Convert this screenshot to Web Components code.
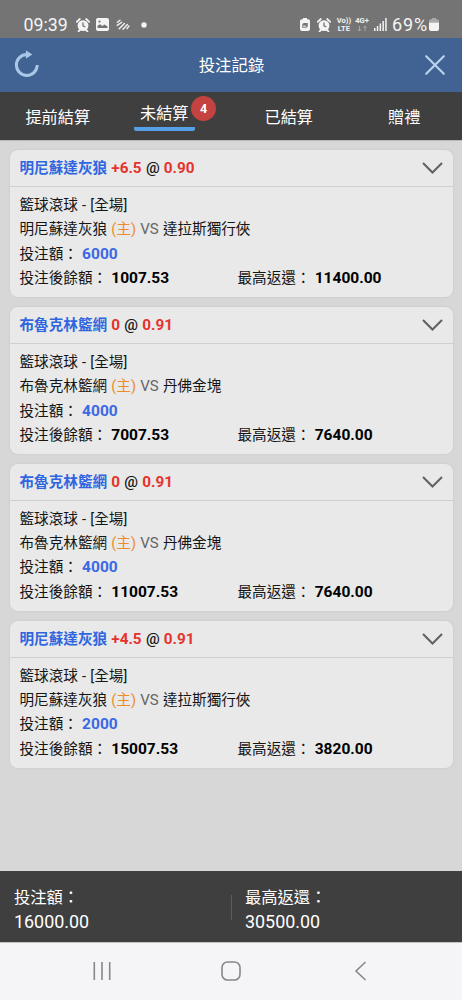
<!DOCTYPE html>
<html lang="zh-Hant">
<head>
<meta charset="UTF-8">
<meta name="viewport" content="width=device-width, initial-scale=1">
<title>投注記錄</title>
<style>
  html, body { margin: 0; height: 100%; }
  body {
    font-family: Roboto, "Noto Sans CJK TC", sans-serif;
    background: #d7d7d7;
    overflow: hidden;
  }
</style>
</head>
<body>
<bet-app></bet-app>
<script>
class StatusBar extends HTMLElement {
  constructor() {
    super();
    this.attachShadow({ mode: "open" });
    this.shadowRoot.innerHTML = `
      <style>
        :host {
          display: flex;
          justify-content: space-between;
          height: 38px;
          box-sizing: border-box;
          padding: 11px 23px 0 23.5px;
          background: #747474;
          color: #f4f4f4;
          line-height: 27px;
          font-size: 17.8px;
        }
        div { display: flex; align-items: center; height: 27px; }
        svg { display: block; fill: #f4f4f4; }
        .net {
          display: flex;
          flex-direction: column;
          font-size: 7.6px;
          line-height: 7.5px;
          font-weight: 700;
          text-align: center;
        }
        .percent { font-size: 18px; letter-spacing: 0.9px; }
      </style>
      <div>
        <span>09:39</span>
        <svg style="margin-left:8px" width="14" height="14" viewBox="0 0 14 14">
          <circle cx="7" cy="7.6" r="5.4"/>
          <path d="M.8 3.8 3.8 1M13.2 3.8 10.2 1M2.6 13.4l1.6-1.8M11.4 13.4 9.8 11.6" stroke="#f4f4f4" stroke-width="1.8" stroke-linecap="round"/>
          <path d="M7 4.6v3.2l2.3 1" fill="none" stroke="#747474" stroke-width="1.3"/>
        </svg>
        <svg style="margin-left:6px" width="13" height="13" viewBox="0 0 13 13">
          <rect width="13" height="13" rx="2"/>
          <path d="M1.5 10V7.8l2.7-1.5 2 1.8 2.4-1.5 2.9 2V10z" fill="#747474"/>
          <circle cx="3.5" cy="3.6" r="1.1" fill="#747474"/>
        </svg>
        <svg style="margin-left:7px" width="14" height="12" viewBox="0 0 14 12">
          <path d="M1.4 3.2 4 1.2M1.2 6.4l4.6-3.2M3.2 9.8 8.4 4.6M7 10.2l4.4-4.6M11 9.6l2-2.6" fill="none" stroke="#f4f4f4" stroke-width="1.4" stroke-linecap="round"/>
        </svg>
        <svg style="margin-left:11px" width="6" height="6"><circle cx="3" cy="3" r="2.7"/></svg>
      </div>
      <div>
        <svg width="10" height="13" viewBox="0 0 10 13">
          <path d="M3 0h4v1.3h1.3Q10 1.3 10 3v8q0 2-2 2H2q-2 0-2-2V3q0-1.7 1.7-1.7H3z"/>
          <path d="M2.2 9.8V7q0-2 2-2h3.6v2.7q0 2.1-2 2.1zM3 9.5 6.3 6.5" fill="#777"/>
          <path d="M3 8.2h3" stroke="#f4f4f4"/>
        </svg>
        <svg style="margin-left:7px" width="14" height="14" viewBox="0 0 14 14">
          <circle cx="7" cy="7.6" r="5.4"/>
          <path d="M.8 3.8 3.8 1M13.2 3.8 10.2 1M2.6 13.4l1.6-1.8M11.4 13.4 9.8 11.6" stroke="#f4f4f4" stroke-width="1.8" stroke-linecap="round"/>
          <path d="M7 4.6v3.2l2.3 1" fill="none" stroke="#747474" stroke-width="1.3"/>
        </svg>
        <span class="net" style="margin-left:6px"><span>Vo))</span><span>LTE</span></span>
        <span class="net" style="margin-left:4px">
          <span>4G+</span>
          <svg style="margin:0 auto" width="11" height="7" viewBox="0 0 11 7">
            <path d="M2.5 1v5M.8 4.2 2.5 6l1.7-1.8M8 6V1M6.3 2.8 8 1l1.7 1.8" fill="none" stroke="#a8a8a8"/>
          </svg>
        </span>
        <svg style="margin-left:5px" width="13" height="13" viewBox="0 0 13 13">
          <path d="M0 10h1.5v3H0zM2.8 8h1.5v5H2.8zM5.6 5.5h1.5V13H5.6zM8.4 3h1.5v10H8.4zM11.2 0h1.5v13h-1.5z"/>
        </svg>
        <span class="percent" style="margin-left:5px">69%</span>
        <svg style="margin-left:1px" width="10" height="13" viewBox="0 0 10 13">
          <path d="M3 0h4v1.3h1.2Q10 1.3 10 3v1.5H0V3q0-1.7 1.8-1.7H3z" fill="#aaa"/>
          <path d="M0 4.5h10V11q0 2-2 2H2q-2 0-2-2z"/>
        </svg>
      </div>
    `;
  }
}

class PageHeader extends HTMLElement {
  constructor() {
    super();
    this.attachShadow({ mode: "open" });
    this.shadowRoot.innerHTML = `
      <style>
        :host {
          display: flex;
          align-items: center;
          justify-content: space-between;
          height: 54px;
          box-sizing: border-box;
          padding: 0 16px 2px 13px;
          background: #406393;
          color: #fff;
          font-size: 16.4px;
        }
        svg { display: block; fill: none; }
        .close { margin-top: 2px; }
      </style>
      <svg width="26" height="28" viewBox="0 0 26 28">
        <path d="M15 4.6h-1.2A10.4 10.4 0 1 0 24.2 15" stroke="#a9c6e6" stroke-width="3"/>
        <path d="M12.9.3 19.3 4.5l-6.4 4.2z" fill="#a9c6e6"/>
      </svg>
      <slot></slot>
      <svg class="close" width="22" height="22" viewBox="0 0 22 22">
        <path d="M2.2 2.2 19.8 19.8M19.8 2.2 2.2 19.8" stroke="#b9d2ec" stroke-width="2.2" stroke-linecap="round"/>
      </svg>
    `;
  }
}

class BetTab extends HTMLElement {
  constructor() {
    super();
    this.attachShadow({ mode: "open" });
    this.shadowRoot.innerHTML = `
      <style>
        :host {
          display: flex;
          flex: 1;
          justify-content: center;
          color: #fff;
          font-size: 16.2px;
          line-height: 24px;
          padding-top: 14px;
        }
        .label { position: relative; height: 24px; }
        :host([active]) { padding-top: 10px; }
        :host([active]) .label {
          padding: 0 6px;
          height: 24.5px;
          border-bottom: 4px solid #55a0e6;
          border-radius: 2px;
          margin-right: 18px;
        }
        .badge {
          position: absolute;
          left: 57px;
          top: -6.5px;
          width: 25px;
          height: 25px;
          border-radius: 50%;
          background: #c4423f;
          font-size: 12.5px;
          line-height: 25px;
          font-weight: 700;
          text-align: center;
        }
      </style>
      <div class="label"><slot></slot></div>
    `;
    const count = this.getAttribute("count");
    if (count) {
      const badge = document.createElement("span");
      badge.className = "badge";
      badge.textContent = count;
      this.shadowRoot.querySelector(".label").append(badge);
    }
  }
}

class BetTabs extends HTMLElement {
  constructor() {
    super();
    this.attachShadow({ mode: "open" });
    this.shadowRoot.innerHTML = `
      <style>
        :host {
          display: flex;
          height: 48px;
          background: #3f3f3f;
        }
      </style>
      <slot></slot>
    `;
  }
}

class BetCard extends HTMLElement {
  constructor() {
    super();
    this.attachShadow({ mode: "open" });
    const get = (name) => this.getAttribute(name);
    this.shadowRoot.innerHTML = `
      <style>
        :host {
          display: block;
          height: 147px;
          box-sizing: border-box;
          border-radius: 8px;
          background: #e9e9e9;
          box-shadow: 0 0 3px rgba(0,0,0,0.07);
          font-size: 14.6px;
          color: #151515;
          word-spacing: 0.6px;
        }
        header {
          display: flex;
          justify-content: space-between;
          align-items: center;
          height: 36px;
          padding: 0 9px 0 9.5px;
          border-bottom: 1px solid #d0d0d0;
          font-weight: 500;
        }
        header > span { margin-top: -3px; }
        .pick { color: #2f66e0; font-weight: 700; }
        .odds { color: #e5332d; font-weight: 700; font-size: 15.3px; }
        .at { font-size: 15.3px; }
        section { padding: 6px 9.5px 0; }
        section div { height: 24.4px; line-height: 24.4px; white-space: nowrap; }
        .home { color: #ee8c2d; }
        .vs { color: #666; font-size: 15px; }
        b { font-size: 15.5px; font-weight: 700; color: #000; }
        b.stake { color: #3b68e4; }
        .sums { display: grid; grid-template-columns: 218px 1fr; }
        svg { display: block; }
      </style>
      <header>
        <span><span class="pick">${get("pick")}</span> <span class="odds">${get("line")}</span> <span class="at">@</span> <span class="odds">${get("odds")}</span></span>
        <svg width="23" height="14" viewBox="0 0 23 14">
          <path d="M2 2 11.5 11.5 21 2" fill="none" stroke="#626262" stroke-width="2.1"/>
        </svg>
      </header>
      <section>
        <div>籃球滾球 - [全場]</div>
        <div>${get("pick")} <span class="home">(主)</span> <span class="vs">VS</span> ${get("away")}</div>
        <div>投注額： <b class="stake">${get("stake")}</b></div>
        <div class="sums">
          <span>投注後餘額： <b>${get("balance")}</b></span>
          <span>最高返還： <b>${get("payout")}</b></span>
        </div>
      </section>
    `;
  }
}

class BetTotals extends HTMLElement {
  constructor() {
    super();
    this.attachShadow({ mode: "open" });
    this.shadowRoot.innerHTML = `
      <style>
        :host {
          display: grid;
          grid-template-columns: 1fr 1fr;
          align-items: center;
          height: 71px;
          background: #3f3f3f;
          color: #fff;
          font-size: 16.3px;
          line-height: 24.5px;
        }
        div { padding: 7px 0 0 14px; }
        div + div {
          background: linear-gradient(#5c5c5c, #5c5c5c) 0 16px / 1px 25px no-repeat;
        }
        span { display: block; height: 24.5px; }
        .num { font-size: 17.9px; }
      </style>
      <div><span>投注額：</span><span class="num">${this.getAttribute("stake")}</span></div>
      <div><span>最高返還：</span><span class="num">${this.getAttribute("payout")}</span></div>
    `;
  }
}

class NavBar extends HTMLElement {
  constructor() {
    super();
    this.attachShadow({ mode: "open" });
    this.shadowRoot.innerHTML = `
      <style>
        :host {
          display: flex;
          align-items: center;
          justify-content: center;
          gap: 110px;
          height: 58px;
          box-sizing: border-box;
          padding-bottom: 2px;
          border-top: 1px solid #c4c4c5;
          background: #f5f5f8;
        }
        svg { display: block; fill: none; stroke: #88888a; stroke-width: 1.6; }
      </style>
      <svg width="20" height="20" viewBox="0 0 20 20"><path d="M3.3 1v18M11 1v18M18.7 1v18"/></svg>
      <svg width="20" height="20" viewBox="0 0 20 20"><rect x="1" y="1" width="18" height="18" rx="5.5"/></svg>
      <svg width="20" height="20" viewBox="0 0 20 20"><path d="M14.5 1 5 10l9.5 9"/></svg>
    `;
  }
}

class BetApp extends HTMLElement {
  constructor() {
    super();
    this.attachShadow({ mode: "open" });
    this.shadowRoot.innerHTML = `
      <style>
        :host {
          display: flex;
          flex-direction: column;
          height: 100vh;
        }
        main {
          flex: 1;
          display: flex;
          flex-direction: column;
          gap: 9.85px;
          padding: 9px 9.5px 0 10px;
          border-top: 1px solid #b8b8b8;
          background: #d7d7d7;
        }
      </style>
      <status-bar></status-bar>
      <page-header>投注記錄</page-header>
      <bet-tabs>
        <bet-tab>提前結算</bet-tab>
        <bet-tab active count="4">未結算</bet-tab>
        <bet-tab>已結算</bet-tab>
        <bet-tab>贈禮</bet-tab>
      </bet-tabs>
      <main>
        <bet-card pick="明尼蘇達灰狼" line="+6.5" odds="0.90" away="達拉斯獨行俠" stake="6000" balance="1007.53" payout="11400.00"></bet-card>
        <bet-card pick="布魯克林籃網" line="0" odds="0.91" away="丹佛金塊" stake="4000" balance="7007.53" payout="7640.00"></bet-card>
        <bet-card pick="布魯克林籃網" line="0" odds="0.91" away="丹佛金塊" stake="4000" balance="11007.53" payout="7640.00"></bet-card>
        <bet-card pick="明尼蘇達灰狼" line="+4.5" odds="0.91" away="達拉斯獨行俠" stake="2000" balance="15007.53" payout="3820.00"></bet-card>
      </main>
      <bet-totals stake="16000.00" payout="30500.00"></bet-totals>
      <nav-bar></nav-bar>
    `;
  }
}

customElements.define("status-bar", StatusBar);
customElements.define("page-header", PageHeader);
customElements.define("bet-tab", BetTab);
customElements.define("bet-tabs", BetTabs);
customElements.define("bet-card", BetCard);
customElements.define("bet-totals", BetTotals);
customElements.define("nav-bar", NavBar);
customElements.define("bet-app", BetApp);
</script>
</body>
</html>
